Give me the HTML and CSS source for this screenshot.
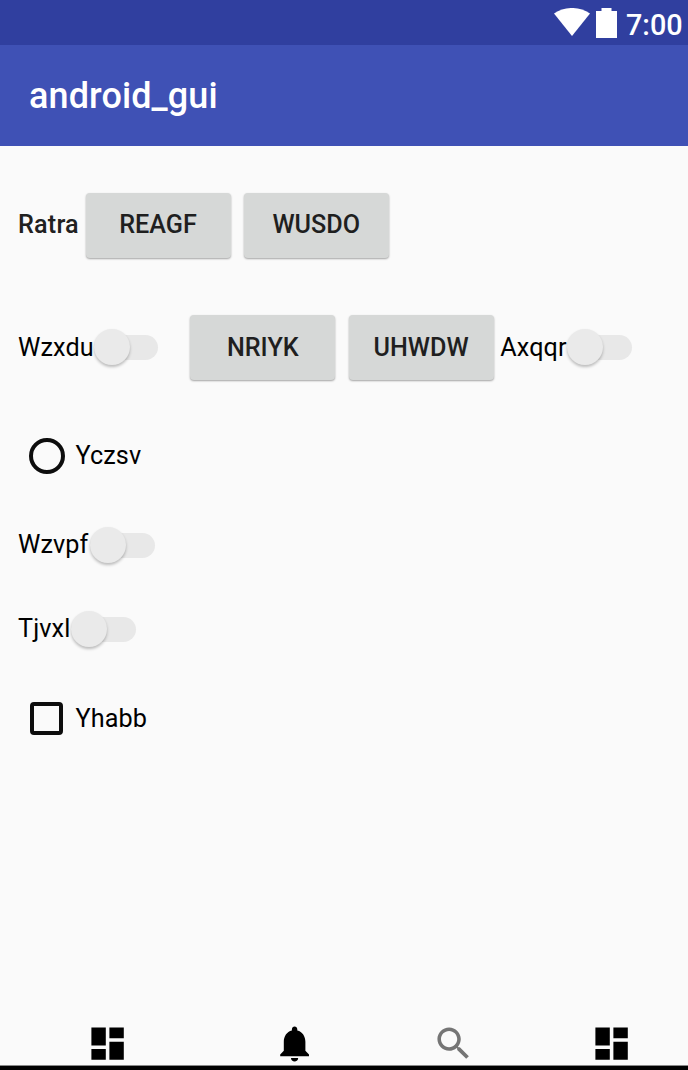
FILE: index.html
```html
<!DOCTYPE html>
<html lang="en">
<head>
<meta charset="utf-8">
<title>android_gui</title>
<link rel="stylesheet" href="styles.css">
</head>
<body>
<div class="screen">
  <div class="status">
    <svg class="wifi" viewBox="0 0 36 28"><path d="M0 5.6C10.5-1.9 25.500-1.900 36 5.600L18 28Z"/></svg>
    <svg class="battery" viewBox="0 0 21 30"><path d="M5.500 0h10v3H21v27H0V3h5.500z"/></svg>
    <span class="clock">7:00</span>
  </div>
  <header class="appbar"><h1 class="title">android_gui</h1></header>
  <main class="content">
    <div class="row row-first">
      <span class="label label-strong w-ratra">Ratra</span>
      <button class="btn">REAGF</button>
      <button class="btn">WUSDO</button>
    </div>
    <div class="row row-second">
      <label class="switch-item w-wzxdu"><span class="label">Wzxdu</span><span class="switch"><span class="thumb"></span></span></label>
      <button class="btn">NRIYK</button>
      <button class="btn">UHWDW</button>
      <label class="switch-item w-axqqr"><span class="label">Axqqr</span><span class="switch"><span class="thumb"></span></span></label>
    </div>
    <label class="row row-radio"><span class="mark"><span class="radio"></span></span><span class="label">Yczsv</span></label>
    <div class="row row-wzvpf"><label class="switch-item w-wzvpf"><span class="label">Wzvpf</span><span class="switch"><span class="thumb"></span></span></label></div>
    <div class="row row-tjvxl"><label class="switch-item w-tjvxl"><span class="label">Tjvxl</span><span class="switch"><span class="thumb"></span></span></label></div>
    <label class="row row-check"><span class="mark"><span class="check"></span></span><span class="label">Yhabb</span></label>
  </main>
  <nav class="nav">
    <svg class="icon" viewBox="0 0 24 24"><path d="M3 13h8V3H3v10zm0 8h8v-6H3v6zm10 0h8V11h-8v10zm0-18v6h8V3h-8z"/></svg>
    <svg class="icon icon-bell" viewBox="0 0 24 24"><path d="M12 22c1.100 0 2-.9 2-2h-4c0 1.100.890 2 2 2zm6-6v-5c0-3.070-1.640-5.640-4.500-6.320V4c0-.830-.670-1.500-1.500-1.500s-1.500.670-1.500 1.500v.680C7.630 5.360 6 7.920 6 11v5l-2 2v1h16v-1l-2-2z"/></svg>
    <svg class="icon icon-search" viewBox="0 0 24 24"><path d="M15.500 14h-.790l-.280-.270C15.410 12.590 16 11.110 16 9.500 16 5.910 13.090 3 9.500 3S3 5.910 3 9.500 5.910 16 9.500 16c1.610 0 3.090-.590 4.230-1.570l.270.280v.790l5 4.990L20.490 19l-4.990-5zm-6 0C7.010 14 5 11.990 5 9.500S7.010 5 9.500 5 14 7.010 14 9.500 11.990 14 9.500 14z"/></svg>
    <svg class="icon icon-last" viewBox="0 0 24 24"><path d="M3 13h8V3H3v10zm0 8h8v-6H3v6zm10 0h8V11h-8v10zm0-18v6h8V3h-8z"/></svg>
  </nav>
</div>
</body>
</html>
```
FILE: styles.css
```css
* { box-sizing: border-box; }
body { margin: 0; font-family: Roboto, sans-serif; background: #fafafa; }
svg { display: block; flex: none; }
.screen { width: 688px; height: 1070px; display: flex; flex-direction: column; overflow: hidden; }
.status { flex: none; height: 45px; background: #303f9f; display: flex; justify-content: flex-end; align-items: flex-start; padding: 8px 6px 0 0; fill: #fff; }
.wifi { width: 36px; height: 28px; }
.battery { width: 21px; height: 30px; margin: 0 9px 0 6px; }
.clock { color: #fff; font-size: 28.800px; font-weight: 500; line-height: 34px; width: 56px; white-space: nowrap; }
.appbar { flex: none; height: 101px; background: #3f51b5; padding-left: 29px; display: flex; align-items: center; }
.title { margin: 0; color: #fff; font-size: 36px; font-weight: 500; line-height: 42px; letter-spacing: .1px; }
.content { flex: 1; padding-left: 18px; }
.row { display: flex; align-items: center; height: 66px; }
.row-first { margin-top: 46px; }
.row-second { margin-top: 56px; }
.row-radio { height: 44px; margin-top: 54px; }
.row-wzvpf { height: 44px; margin-top: 45px; }
.row-tjvxl { height: 44px; margin-top: 40px; }
.row-check { height: 44px; margin-top: 45px; }
.label { font-size: 25.200px; line-height: 30px; color: #000; white-space: nowrap; letter-spacing: .1px; }
.row-second .label, .row-check .label { padding-top: 2px; }
.label-strong { font-weight: 500; color: #212121; padding-bottom: 1px; letter-spacing: .2px; }
.w-ratra { width: 67.500px; }
.btn { flex: none; width: 145px; height: 65px; margin: 0 13.300px 0 0; padding: 0 0 1px; border: 0; border-radius: 4px; background: #d6d8d7; box-shadow: 0 1px 2px rgba(0,0,0,.35); font: 500 25.200px/30px Roboto, sans-serif; color: #1f1f1f; }
.row-second .btn { padding: 1px 0 0; }
.switch-item { display: flex; align-items: center; justify-content: space-between; flex: none; }
.w-wzxdu { width: 140px; margin-right: 32.300px; }
.w-axqqr { width: 131.500px; margin-left: -6.600px; }
.w-wzvpf { width: 137px; }
.w-tjvxl { width: 118px; }
.switch { flex: none; width: 65px; height: 25px; border-radius: 13px; background: #e8e8e8; display: flex; align-items: center; }
.w-wzxdu .switch { width: 64px; }
.thumb { width: 36px; height: 36px; flex: none; border-radius: 50%; background: #eaeaea; box-shadow: 0 2px 3px rgba(0,0,0,.25); }
.mark { width: 57.500px; flex: none; display: flex; padding-left: 11px; }
.radio { width: 36px; height: 36px; border: 4px solid #0d0d0d; border-radius: 50%; }
.check { width: 33px; height: 33px; margin-left: 1px; border: 4px solid #0d0d0d; border-radius: 4px; }
.nav { flex: none; height: 48px; border-bottom: 4px solid #000; box-shadow: inset 0 -1px #888; display: flex; padding: .400px 0 0 86.400px; }
.icon { width: 43.200px; height: 43.200px; fill: #000; }
.icon-bell { margin-left: 143.800px; }
.icon-search { margin-left: 115.500px; fill: #757575; }
.icon-last { margin-left: 114.900px; }
```
